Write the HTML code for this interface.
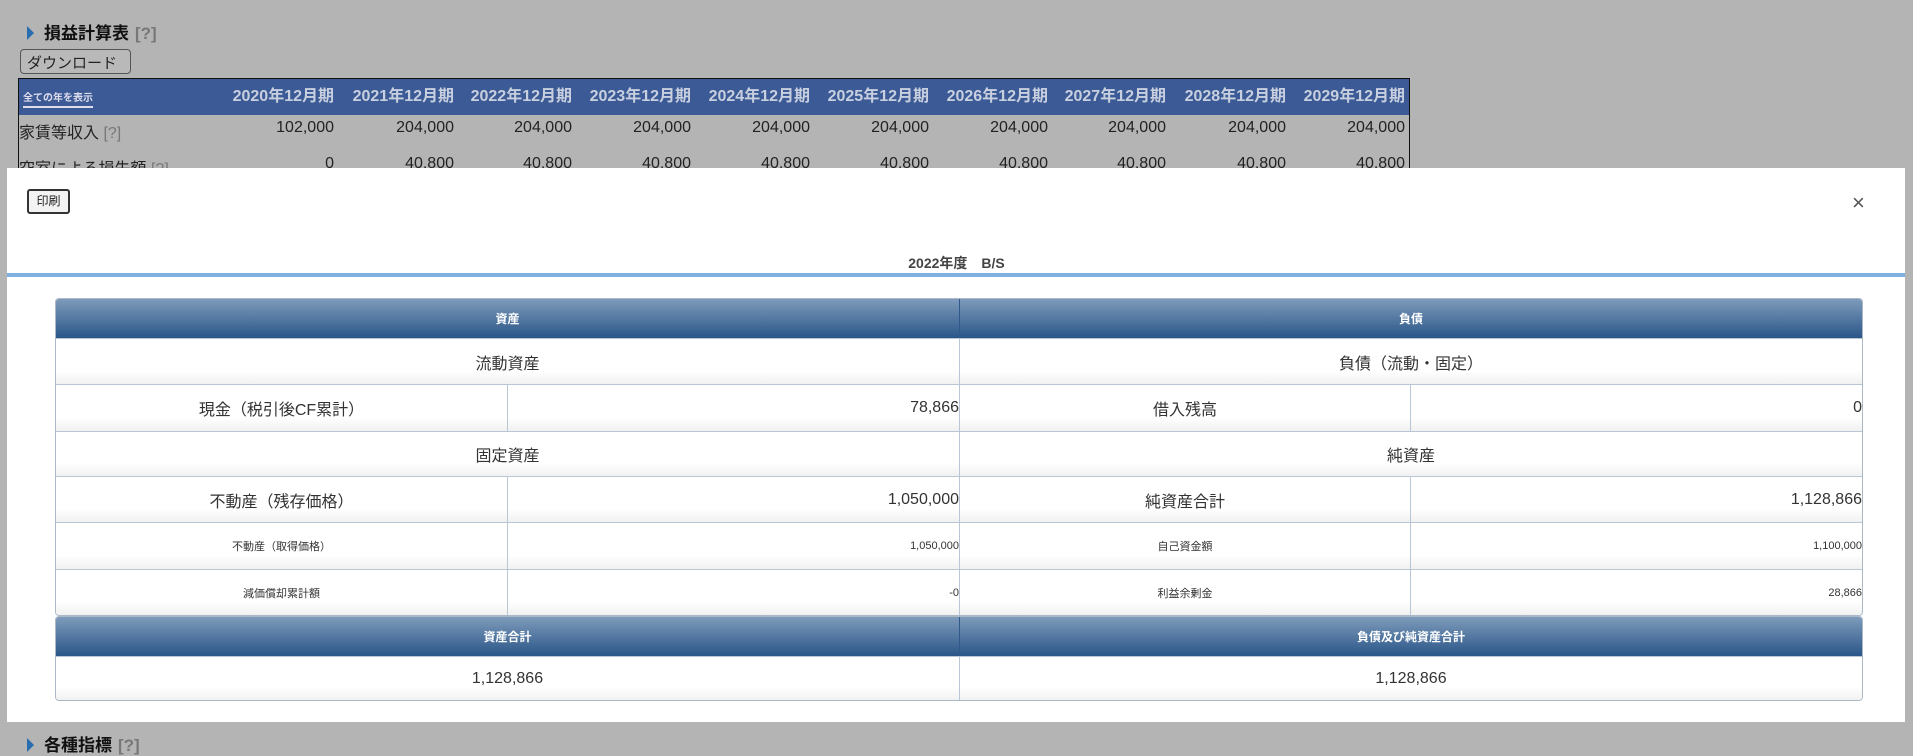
<!DOCTYPE html>
<html><head><meta charset="utf-8"><style>
*{box-sizing:border-box;margin:0;padding:0}
body{width:1913px;height:755px;background:#b4b4b4;font-family:"Liberation Sans","Noto Sans CJK JP",sans-serif;position:relative;overflow:hidden;color:#222}
.abs{position:absolute}
.h{left:27px;font-size:17px;font-weight:bold;color:#111}
.h .tri{display:inline-block;width:0;height:0;border-left:7px solid #2a6db0;border-top:7px solid transparent;border-bottom:7px solid transparent;margin-right:10px;vertical-align:-1px}
.h .q{color:#777;margin-left:6px}
.sel{left:20px;top:49px;width:111px;height:25px;border:1px solid #555;border-radius:4px;font-size:15px;padding:2px 6px;color:#222;background:#b9b9b9}
.pl{left:18px;top:78px;width:1392px;height:92px;border:1px solid #111;border-bottom:none}
.pl .hd{height:36px;background:#3c5a95;position:relative}
.pl .hd .all{position:absolute;left:4px;top:10px;font-size:10px;font-weight:bold;color:#dde;border-bottom:2px solid #dde;padding-bottom:2px}
.yr{position:absolute;top:0;height:36px;line-height:36px;font-size:16px;font-weight:bold;color:#c8d0e0}
.row{position:absolute;left:0;font-size:16px;color:#222;width:1390px;height:30px}
.row span{position:absolute}
.modal{left:7px;top:168px;width:1898px;height:554px;background:#fff}
.btn{left:27px;top:189px;width:43px;height:25px;border:2px solid #333;border-radius:3px;font-size:12px;text-align:center;line-height:20px;background:#f3f3f3}
.x{left:1852px;top:190px;font-size:22px;color:#555}
.title{left:0;width:1913px;top:253px;text-align:center;font-size:14px;font-weight:bold;color:#444}
.line{left:7px;width:1898px;top:273px;height:4px;background:#7fb0e0}
.bs{left:55px;top:298px;width:1808px;border:1px solid #aab8c8;border-radius:4px;overflow:hidden}
.bs2{top:616px}
.r{display:flex;border-bottom:1px solid #b8c6d6;background:linear-gradient(#fff 70%,#f1f1f1)}
.r:last-child{border-bottom:none}
.r div{display:flex;align-items:center;justify-content:center;font-size:16px;color:#333}
.r div+div{border-left:1px solid #b8c6d6}
.hr{background:linear-gradient(#7e9bbb,#2a5688);height:40px}
.hr div{color:#fff;font-size:12px;font-weight:bold}
.hr div+div{border-left:1px solid #30588a}
.w{width:903px}
.a{width:451px}.b{width:452px}
.num{justify-content:flex-end!important}
.sm div{font-size:11px}
</style></head><body>
<div class="abs h" style="top:19px"><span class="tri"></span>損益計算表<span class="q">[?]</span></div>
<div class="abs sel">ダウンロード <span style="font-size:11px">▼</span></div>
<div class="abs pl">
 <div class="hd"><span class="all">全ての年を表示</span></div>
 <span class="yr" style="right:1075px">2020年12月期</span>
 <span class="yr" style="right:955px">2021年12月期</span>
 <span class="yr" style="right:837px">2022年12月期</span>
 <span class="yr" style="right:718px">2023年12月期</span>
 <span class="yr" style="right:599px">2024年12月期</span>
 <span class="yr" style="right:480px">2025年12月期</span>
 <span class="yr" style="right:361px">2026年12月期</span>
 <span class="yr" style="right:243px">2027年12月期</span>
 <span class="yr" style="right:123px">2028年12月期</span>
 <span class="yr" style="right:4px">2029年12月期</span>
 <div class="row" style="top:40px">
  <span style="left:0">家賃等収入 <b style="color:#777;font-weight:normal">[?]</b></span>
  <span style="right:1075px">102,000</span><span style="right:955px">204,000</span><span style="right:837px">204,000</span><span style="right:718px">204,000</span><span style="right:599px">204,000</span><span style="right:480px">204,000</span><span style="right:361px">204,000</span><span style="right:243px">204,000</span><span style="right:123px">204,000</span><span style="right:4px">204,000</span>
 </div>
 <div class="row" style="top:76px">
  <span style="left:0">空室による損失額 <b style="color:#777;font-weight:normal">[?]</b></span>
  <span style="right:1075px">0</span><span style="right:955px">40,800</span><span style="right:837px">40,800</span><span style="right:718px">40,800</span><span style="right:599px">40,800</span><span style="right:480px">40,800</span><span style="right:361px">40,800</span><span style="right:243px">40,800</span><span style="right:123px">40,800</span><span style="right:4px">40,800</span>
 </div>
</div>
<div class="abs modal"></div>
<div class="abs btn">印刷</div>
<div class="abs x">×</div>
<div class="abs title">2022年度　B/S</div>
<div class="abs line"></div>
<div class="abs bs">
 <div class="r hr"><div class="w">資産</div><div class="w">負債</div></div>
 <div class="r" style="height:46px"><div class="w">流動資産</div><div class="w">負債（流動・固定）</div></div>
 <div class="r" style="height:47px"><div class="a">現金（税引後CF累計）</div><div class="b num">78,866</div><div class="a">借入残高</div><div class="b num">0</div></div>
 <div class="r" style="height:45px"><div class="w">固定資産</div><div class="w">純資産</div></div>
 <div class="r" style="height:46px"><div class="a">不動産（残存価格）</div><div class="b num">1,050,000</div><div class="a">純資産合計</div><div class="b num">1,128,866</div></div>
 <div class="r sm" style="height:47px"><div class="a">不動産（取得価格）</div><div class="b num">1,050,000</div><div class="a">自己資金額</div><div class="b num">1,100,000</div></div>
 <div class="r sm" style="height:45px"><div class="a">減価償却累計額</div><div class="b num">-0</div><div class="a">利益余剰金</div><div class="b num">28,866</div></div>
</div>
<div class="abs bs bs2">
 <div class="r hr"><div class="w">資産合計</div><div class="w">負債及び純資産合計</div></div>
 <div class="r" style="height:43px"><div class="w">1,128,866</div><div class="w">1,128,866</div></div>
</div>
<div class="abs h" style="top:731px"><span class="tri"></span>各種指標<span class="q">[?]</span></div>
</body></html>
